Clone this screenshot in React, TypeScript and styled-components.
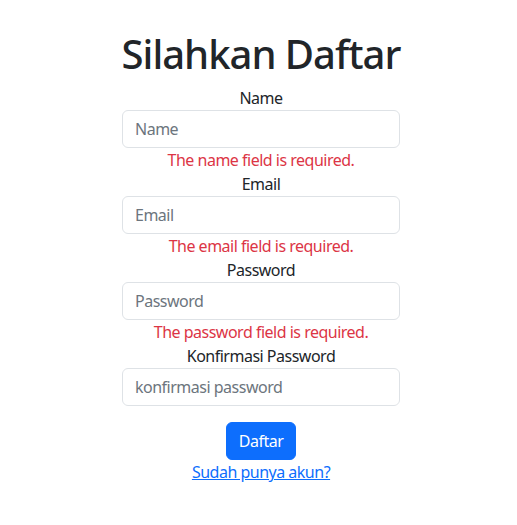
import styled, { createGlobalStyle } from 'styled-components';

const GlobalStyle = createGlobalStyle`
  body {
    margin: 0;
    padding: 0 0 0 5px;
    background: #fff;
    color: #212529;
    font-family: "Noto Sans", "Open Sans", sans-serif;
    font-size: 16px;
    line-height: 1.5;
    letter-spacing: -0.5px;
  }
  * { box-sizing: border-box; }
`;

const Page = styled.div`
  display: flex;
  justify-content: center;
  padding-top: 30px;
`;

const Form = styled.form`
  width: 278px;
  display: flex;
  flex-direction: column;
  align-items: stretch;
  text-align: center;
`;

const Title = styled.h1`
  margin: 0 -40px 8px;
  font-size: 40px;
  font-weight: 500;
  line-height: 1.2;
  letter-spacing: -1px;
  white-space: nowrap;
`;

const Label = styled.label`
  display: block;
  line-height: 24px;
`;

const Input = styled.input`
  display: block;
  width: 100%;
  height: 38px;
  padding: 6px 12px;
  font: inherit;
  letter-spacing: -0.5px;
  color: #212529;
  border: 1px solid #dee2e6;
  border-radius: 6px;
  outline: none;
  &::placeholder { color: #6c757d; }
`;

const Error = styled.div`
  color: #dc3545;
  line-height: 24px;
`;

const Button = styled.button`
  align-self: center;
  margin-top: 16px;
  height: 38px;
  padding: 6px 12px;
  font: inherit;
  letter-spacing: -0.5px;
  color: #fff;
  background: #0d6efd;
  border: 1px solid #0d6efd;
  border-radius: 6px;
`;

const LinkText = styled.a`
  color: #0d6efd;
  text-decoration: underline;
  line-height: 24px;
`;

const fields = [
  { label: 'Name', placeholder: 'Name', type: 'text', error: 'The name field is required.' },
  { label: 'Email', placeholder: 'Email', type: 'email', error: 'The email field is required.' },
  { label: 'Password', placeholder: 'Password', type: 'password', error: 'The password field is required.' },
  { label: 'Konfirmasi Password', placeholder: 'konfirmasi password', type: 'password', error: '' },
];

export default function App() {
  return (
    <Page>
      <GlobalStyle />
      <Form onSubmit={(e) => e.preventDefault()}>
        <Title>Silahkan Daftar</Title>
        {fields.map((f) => (
          <div key={f.label}>
            <Label>{f.label}</Label>
            <Input type={f.type} placeholder={f.placeholder} />
            {f.error && <Error>{f.error}</Error>}
          </div>
        ))}
        <Button type="submit">Daftar</Button>
        <LinkText href="#">Sudah punya akun?</LinkText>
      </Form>
    </Page>
  );
}
